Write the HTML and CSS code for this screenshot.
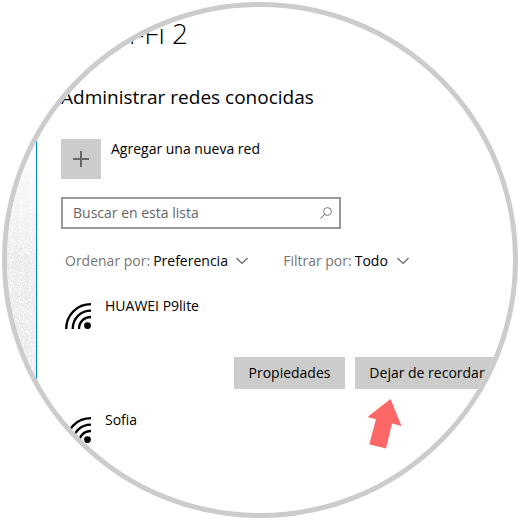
FILE: index.html
```html
<!DOCTYPE html>
<html lang="es">
<head>
  <meta charset="UTF-8" />
  <meta name="viewport" content="width=device-width, initial-scale=1.0"/>
  <title>Administrar redes conocidas</title>
  <link rel="stylesheet" href="styles.css">
</head>
<body>
  <svg width="0" height="0" class="defs" aria-hidden="true">
    <symbol id="wifi" viewBox="0 0 26 26">
      <circle cx="22.5" cy="22.7" r="3.4"/>
      <path d="M1.200 26C1.200 12 12 1.200 26 1.200M7.700 26C7.700 15.500 15.500 7.700 26 7.700M14 26C14 19 19 14 26 14" fill="none" stroke="#000" stroke-width="2.300"/>
    </symbol>
    <symbol id="chevron" viewBox="0 0 12 8">
      <path d="M.5 1L6 6.500L11.500 1" fill="none" stroke="#666" stroke-width="1.200"/>
    </symbol>
  </svg>

  <div class="lens">
    <aside class="sidebar">
      <svg class="grain" aria-hidden="true">
        <filter id="noise" x="0" y="0" width="100%" height="100%">
          <feTurbulence type="fractalNoise" baseFrequency="0.9" numOctaves="1" seed="4"/>
          <feColorMatrix values="0 0 0 0 1  0 0 0 0 1  0 0 0 0 1  9 0 0 0 -5"/>
        </filter>
        <rect width="100%" height="100%" filter="url(#noise)"/>
      </svg>
    </aside>

    <main class="content">
      <h1>Wi-Fi 2</h1>
      <h2>Administrar redes conocidas</h2>

      <div class="add">
        <button class="add-button" type="button" aria-labelledby="add-label">
          <svg width="16" height="16" viewBox="0 0 16 16"><path d="M8 0V16M0 8H16" stroke="#666" stroke-width="2"/></svg>
        </button>
        <span id="add-label">Agregar una nueva red</span>
      </div>

      <div class="search">
        <input type="text" placeholder="Buscar en esta lista" aria-label="Buscar en esta lista">
        <svg width="12" height="12" viewBox="0 0 12 12"><g fill="none" stroke="#777"><circle cx="7.500" cy="4.500" r="3.900"/><path d="M4.700 7.300L.3 11.700"/></g></svg>
      </div>

      <div class="filters">
        <div class="filter">
          <label for="order">Ordenar por:</label>
          <select id="order"><option>Preferencia</option><option>Nombre</option></select>
          <svg class="chevron"><use href="#chevron"/></svg>
        </div>
        <div class="filter">
          <label for="show">Filtrar por:</label>
          <select id="show"><option>Todo</option></select>
          <svg class="chevron"><use href="#chevron"/></svg>
        </div>
      </div>

      <ul class="networks">
        <li>
          <div class="network">
            <svg class="wifi"><use href="#wifi"/></svg>
            <span>HUAWEI P9lite</span>
          </div>
          <div class="actions">
            <button type="button" class="properties">Propiedades</button>
            <button type="button" class="forget">Dejar de recordar</button>
            <svg class="arrow" width="35" height="50" viewBox="0 0 35 50"><path d="M23.500 0L34.500 27L25 24.600L19 49.500L2.300 45.300L9 20.300L.5 18Z" fill="#ff6666"/></svg>
          </div>
        </li>
        <li>
          <div class="network">
            <svg class="wifi"><use href="#wifi"/></svg>
            <span>Sofia</span>
          </div>
        </li>
      </ul>
    </main>
  </div>
</body>
</html>
```
FILE: styles.css
```css
* {
  box-sizing: border-box;
}
body {
  margin: 0;
  padding: 2px;
  background-color: #fff;
  color: #000;
  font-family: "Open Sans", "Noto Sans", sans-serif;
  font-size: 14px;
  line-height: 20px;
}
svg {
  display: block;
  flex: none;
}
.defs {
  position: absolute;
}

/* round frame */
.lens {
  display: flex;
  aspect-ratio: 1;
  border: 5px solid #ccc;
  border-radius: 50%;
  overflow: hidden;
}
.sidebar {
  flex: none;
  width: 30px;
  border-right: 1px solid #0083d9;
  background: linear-gradient(#fff 25%, #ececec 50%);
}
.grain {
  width: 100%;
  height: 100%;
}
.content {
  flex: 1;
  min-width: 0;
  padding: 6px 0 0 24px;
}
h1 {
  margin: 0 0 32px;
  padding-left: 43px;
  font-size: 28px;
  font-weight: 300;
  line-height: 40px;
}
h2 {
  margin: 0 0 30px;
  font-size: 19px;
  font-weight: 400;
  line-height: 24px;
}

.add {
  display: flex;
  gap: 10px;
  margin-bottom: 18px;
}
button {
  height: 32px;
  padding: 0;
  border: none;
  background-color: #ccc;
  color: #000;
  font: inherit;
  white-space: nowrap;
}
.add-button {
  display: flex;
  align-items: center;
  justify-content: center;
  width: 40px;
  height: 40px;
}

.search {
  display: flex;
  align-items: center;
  width: 280px;
  height: 32px;
  padding: 0 7px 0 10px;
  border: 2px solid #999;
}
.search input {
  flex: 1;
  min-width: 0;
  padding: 0;
  border: none;
  outline: none;
  background: none;
  font: inherit;
}
.search input::placeholder {
  color: #666;
  opacity: 1;
}

.filters {
  display: flex;
  gap: 35px;
  padding: 22px 0 0 4px;
}
.filter {
  display: flex;
  align-items: center;
  gap: 3px;
}
.filter label {
  color: #767676;
}
.filter select {
  appearance: none;
  padding: 0;
  border: none;
  background: none;
  color: #000;
  font: inherit;
}
.chevron {
  width: 12px;
  height: 8px;
  margin-left: 5px;
}

.networks {
  margin: 0;
  padding: 25px 0 0;
  list-style: none;
}
.networks li {
  margin-bottom: 21px;
}
.network {
  display: flex;
  gap: 14px;
  padding-left: 4px;
}
.wifi {
  width: 26px;
  height: 26px;
  margin-top: 7px;
}
.actions {
  display: flex;
  gap: 10px;
  position: relative;
  padding: 28px 0 0 173px;
}
.properties {
  width: 111px;
}
.forget {
  width: 144px;
}

/* pointer over the forget button */
.arrow {
  position: absolute;
  top: 70px;
  left: 306px;
}
```
